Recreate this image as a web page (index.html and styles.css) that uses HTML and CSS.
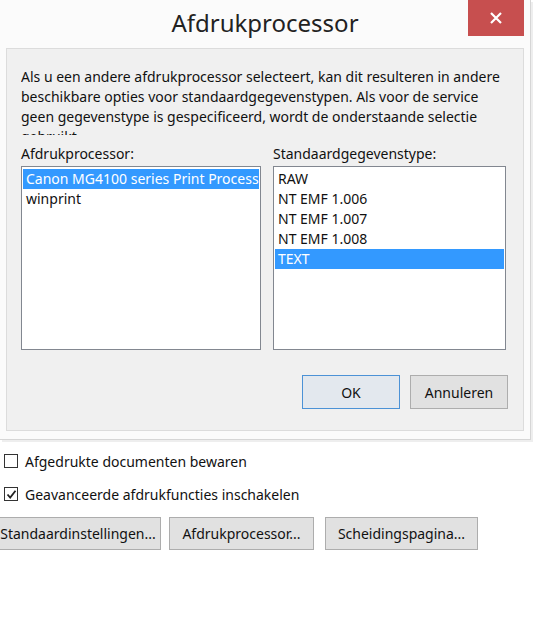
FILE: index.html
```html
<!DOCTYPE html>
<html>
<head>
  <title>Afdrukprocessor</title>
  <link rel="stylesheet" href="styles.css">
</head>
<body>

<div class="window">
  <div class="titlebar">
    <span></span>
    <h1 class="title">Afdrukprocessor</h1>
    <button class="close" title="Sluiten">
      <svg width="14" height="14" viewBox="0 0 14 14"><path d="M2 2 L12 12 M12 2 L2 12" stroke="#fff" stroke-width="2.2"/></svg>
    </button>
  </div>

  <div class="panel">
    <p class="intro">Als u een andere afdrukprocessor selecteert, kan dit resulteren in andere<br>
      beschikbare opties voor standaardgegevenstypen. Als voor de service<br>
      geen gegevenstype is gespecificeerd, wordt de onderstaande selectie<br>
      gebruikt.</p>

    <div class="lists">
      <div class="col left">
        <label>Afdrukprocessor:</label>
        <ul class="listbox">
          <li class="sel">Canon MG4100 series Print Processor</li>
          <li>winprint</li>
        </ul>
      </div>
      <div class="col right">
        <label>Standaardgegevenstype:</label>
        <ul class="listbox">
          <li>RAW</li>
          <li>NT EMF 1.006</li>
          <li>NT EMF 1.007</li>
          <li>NT EMF 1.008</li>
          <li class="sel">TEXT</li>
        </ul>
      </div>
    </div>

    <div class="actions">
      <button class="btn default">OK</button>
      <button class="btn">Annuleren</button>
    </div>
  </div>
</div>

<div class="options">
  <label class="check"><span class="box"></span>Afgedrukte documenten bewaren</label>
  <label class="check"><span class="box on">
    <svg width="11" height="11" viewBox="0 0 11 11"><path d="M1.5 5.5 L4.2 8.5 L9.5 1.8" fill="none" stroke="#222" stroke-width="1.8"/></svg>
  </span>Geavanceerde afdrukfuncties inschakelen</label>
</div>

<div class="buttons">
  <button class="btn wide first">Standaardinstellingen...</button>
  <button class="btn wide second">Afdrukprocessor...</button>
  <button class="btn wide third">Scheidingspagina...</button>
</div>

</body>
</html>
```

FILE: styles.css
```css
body {
  margin: 0;
  background: #fff;
  font-family: "Noto Sans", "Open Sans", sans-serif;
  font-size: 14px;
  color: #111;
}
.window {
  width: 530px;
  height: 439px;
  background: #fbfbfb;
  border-right: 1px solid #d6d6d6;
  border-bottom: 1px solid #d6d6d6;
  box-shadow: 2px 2px 0 #eee;
}
.titlebar {
  display: grid;
  grid-template-columns: 1fr auto 1fr;
  align-items: start;
  height: 48px;
}
.title {
  margin: 6px 0 0;
  font-size: 24px;
  font-weight: normal;
  color: #222;
}
.close {
  justify-self: end;
  width: 56px;
  height: 36px;
  margin-right: 6px;
  border: 0;
  padding: 0;
  background: #c74f4f;
  display: flex;
  align-items: center;
  justify-content: center;
}
.panel {
  height: 381px;
  margin: 0 6px;
  padding: 0 14px;
  background: #f0f0f0;
  border: 1px solid #dcdcdc;
}
.intro {
  margin: 18px 0 0;
  height: 68px;
  overflow: hidden;
  line-height: 20px;
  white-space: nowrap;
}
.lists {
  display: flex;
  gap: 12px;
  margin-top: 9px;
}
.col label {
  display: block;
  line-height: 20px;
  margin-bottom: 2px;
}
.left .listbox { width: 240px; }
.right .listbox { width: 233px; }
.listbox {
  box-sizing: border-box;
  list-style: none;
  margin: 0;
  padding: 2px 1px;
  height: 184px;
  background: #fff;
  border: 1px solid #828790;
  overflow: hidden;
}
.listbox li {
  line-height: 20px;
  padding: 0 3px;
  white-space: nowrap;
  overflow: hidden;
}
.listbox li.sel {
  background: #3399ff;
  color: #fff;
}
.actions {
  display: flex;
  justify-content: flex-end;
  gap: 10px;
  margin-top: 25px;
  margin-right: 1px;
}
.btn {
  font-family: inherit;
  font-size: 14px;
  color: #111;
  height: 34px;
  width: 98px;
  background: #e1e1e1;
  border: 1px solid #adadad;
  padding: 0;
}
.btn.default {
  border-color: #4c92d6;
  background: #e3e8ee;
}
.options {
  padding: 11px 0 0 4px;
}
.check {
  display: flex;
  align-items: center;
  gap: 7px;
  height: 20px;
  margin-bottom: 13px;
}
.box {
  width: 12px;
  height: 12px;
  border: 1px solid #333;
  background: #fff;
  display: flex;
  align-items: center;
  justify-content: center;
}
.buttons {
  display: flex;
  margin-top: 7px;
}
.btn.wide {
  height: 33px;
}
.btn.first {
  width: 166px;
  margin-left: -5px;
}
.btn.second {
  width: 145px;
  margin-left: 8px;
}
.btn.third {
  width: 153px;
  margin-left: 11px;
}
```
